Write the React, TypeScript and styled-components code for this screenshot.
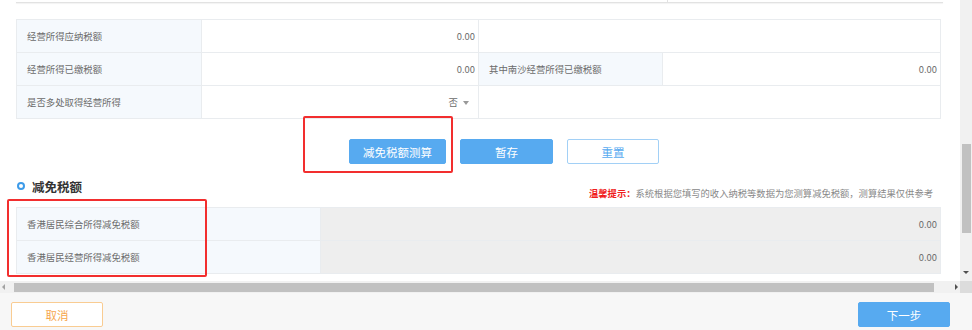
import React from 'react';
import styled, { createGlobalStyle } from 'styled-components';

const GlobalStyle = createGlobalStyle`
  html, body { margin: 0; padding: 0; background: #ffffff; }
  body { font-family: "Noto Sans CJK SC", "Liberation Sans", sans-serif; }
`;

const Page = styled.div`
  position: relative;
  width: 972px;
  height: 330px;
  display: flex;
  flex-direction: column;
  overflow: hidden;
`;

const Viewport = styled.div`
  display: flex;
  height: 293px;
`;

const MainColumn = styled.div`
  width: 960px;
  display: flex;
  flex-direction: column;
`;

const Content = styled.div`
  height: 281px;
  overflow: hidden;
  padding-left: 16px;
  box-sizing: border-box;
`;

const PrevTableEdge = styled.div`
  width: 927px;
  height: 2px;
  border-bottom: 1px solid #e2e2e2;
  box-shadow: 0 1px 1px rgba(0, 0, 0, 0.05);
  display: grid;
  grid-template-columns: 652px 1fr;
  & > div:first-child { border-right: 1px solid #e2e2e2; }
`;

const Table = styled.div<{ $cols: string; $top: number }>`
  margin-top: ${(p) => p.$top}px;
  width: 925px;
  display: grid;
  grid-template-columns: ${(p) => p.$cols};
  border-top: 1px solid #e9ecef;
  border-left: 1px solid #e9ecef;
  box-sizing: border-box;
`;

const Cell = styled.div<{ $kind?: 'label' | 'value' | 'blank' | 'gray'; $span?: number }>`
  height: 33px;
  box-sizing: border-box;
  border-right: 1px solid #e9ecef;
  border-bottom: 1px solid #e9ecef;
  display: flex;
  align-items: center;
  font-size: 9.4px;
  color: #6b6b6b;
  grid-column: span ${(p) => p.$span ?? 1};
  background: ${(p) =>
    p.$kind === 'label' ? '#f5f9fd' : p.$kind === 'gray' ? '#eeeeee' : '#ffffff'};
  justify-content: ${(p) => (p.$kind === 'label' ? 'flex-start' : 'flex-end')};
  padding: ${(p) => (p.$kind === 'label' ? '0 0 0 10px' : '0 3px 0 0')};
`;

const Caret = styled.span`
  display: inline-block;
  margin-left: 5px;
  margin-right: 6px;
  width: 0;
  height: 0;
  border-left: 3.5px solid transparent;
  border-right: 3.5px solid transparent;
  border-top: 4px solid #999;
  transform: translateY(1px);
`;

const ButtonRow = styled.div`
  display: flex;
  gap: 14px;
  padding-left: 333px;
  margin-top: 20px;
`;

const Button = styled.button<{ $variant: 'primary' | 'outline' | 'warn'; $w: number }>`
  width: ${(p) => p.$w}px;
  height: 25px;
  border-radius: 2px;
  font-family: inherit;
  font-size: 11.5px;
  padding: 0;
  cursor: pointer;
  box-sizing: border-box;
  background: ${(p) => (p.$variant === 'primary' ? '#57aaf0' : '#ffffff')};
  color: ${(p) =>
    p.$variant === 'primary' ? '#ffffff' : p.$variant === 'warn' ? '#f6a64c' : '#57aaf0'};
  border: 1px solid
    ${(p) =>
      p.$variant === 'primary' ? '#57aaf0' : p.$variant === 'warn' ? '#f9cc92' : '#a2d0f6'};
`;

const SectionHeader = styled.div`
  width: 925px;
  height: 30px;
  margin-top: 13px;
  display: flex;
  justify-content: space-between;
`;

const Title = styled.div`
  display: flex;
  align-items: center;
  gap: 7px;
  height: 18px;
  font-size: 12.5px;
  font-weight: bold;
  color: #333;
  align-self: flex-start;
`;

const Ring = styled.span`
  width: 8px;
  height: 8px;
  box-sizing: border-box;
  border: 2px solid #3d9be9;
  border-radius: 50%;
  margin-left: 1px;
`;

const Tip = styled.div`
  align-self: flex-end;
  margin-bottom: 7px;
  margin-right: 8px;
  font-size: 9.3px;
  line-height: 14px;
  color: #888;
  b { color: #f01d1d; }
`;

const HScroll = styled.div`
  height: 12px;
  background: #f1f1f1;
  display: flex;
  align-items: center;
`;

const HThumb = styled.div`
  margin-left: 9px;
  width: 920px;
  height: 9px;
  background: #c1c1c1;
`;

const Arrow = styled.span<{ $dir: 'left' | 'right' | 'down' }>`
  width: 0;
  height: 0;
  ${(p) =>
    p.$dir === 'down'
      ? 'border-left: 3px solid transparent; border-right: 3px solid transparent; border-top: 3px solid #505050;'
      : p.$dir === 'left'
      ? 'border-top: 3px solid transparent; border-bottom: 3px solid transparent; border-right: 3px solid #a3a3a3;'
      : 'border-top: 3px solid transparent; border-bottom: 3px solid transparent; border-left: 3px solid #505050;'}
`;

const VScroll = styled.div`
  width: 12px;
  display: flex;
  flex-direction: column;
  background: #f1f1f1;
`;

const VTrack = styled.div`
  height: 281px;
  display: flex;
  flex-direction: column;
  align-items: center;
`;

const VThumb = styled.div`
  margin-top: 144px;
  width: 9px;
  height: 89px;
  background: #c1c1c1;
`;

const Corner = styled.div`
  height: 12px;
  background: #dcdcdc;
`;

const Footer = styled.div`
  flex: 1;
  background: #f7f7f7;
  display: flex;
  justify-content: space-between;
  align-items: flex-start;
  padding: 9px 22px 0 11px;
`;

const Annotation = styled.div<{ $x: number; $y: number; $w: number; $h: number }>`
  position: absolute;
  left: ${(p) => p.$x}px;
  top: ${(p) => p.$y}px;
  width: ${(p) => p.$w}px;
  height: ${(p) => p.$h}px;
  box-sizing: border-box;
  border: 2px solid #f22e2e;
  border-radius: 2px;
  pointer-events: none;
`;

export default function App() {
  return (
    <Page>
      <GlobalStyle />
      <Viewport>
        <MainColumn>
          <Content>
            <PrevTableEdge>
              <div />
              <div />
            </PrevTableEdge>
            <Table $cols="185px 277px 184px 1fr" $top={16}>
              <Cell $kind="label">经营所得应纳税额</Cell>
              <Cell $kind="value">0.00</Cell>
              <Cell $kind="blank" $span={2} />
              <Cell $kind="label">经营所得已缴税额</Cell>
              <Cell $kind="value">0.00</Cell>
              <Cell $kind="label">其中南沙经营所得已缴税额</Cell>
              <Cell $kind="value">0.00</Cell>
              <Cell $kind="label">是否多处取得经营所得</Cell>
              <Cell $kind="value">
                否<Caret />
              </Cell>
              <Cell $kind="blank" $span={2} />
            </Table>
            <ButtonRow>
              <Button $variant="primary" $w={97}>减免税额测算</Button>
              <Button $variant="primary" $w={93}>暂存</Button>
              <Button $variant="outline" $w={92}>重置</Button>
            </ButtonRow>
            <SectionHeader>
              <Title>
                <Ring />
                减免税额
              </Title>
              <Tip>
                <b>温馨提示：</b>系统根据您填写的收入纳税等数据为您测算减免税额，测算结果仅供参考
              </Tip>
            </SectionHeader>
            <Table $cols="304px 1fr" $top={0}>
              <Cell $kind="label">香港居民综合所得减免税额</Cell>
              <Cell $kind="gray">0.00</Cell>
              <Cell $kind="label">香港居民经营所得减免税额</Cell>
              <Cell $kind="gray">0.00</Cell>
            </Table>
          </Content>
          <HScroll>
            <span style={{ marginLeft: 2, display: 'flex' }}>
              <Arrow $dir="left" />
            </span>
            <HThumb />
            <span style={{ marginLeft: 21, display: 'flex' }}>
              <Arrow $dir="right" />
            </span>
          </HScroll>
        </MainColumn>
        <VScroll>
          <VTrack>
            <VThumb />
            <span style={{ marginTop: 38, display: 'flex' }}>
              <Arrow $dir="down" />
            </span>
          </VTrack>
          <Corner />
        </VScroll>
      </Viewport>
      <Footer>
        <Button $variant="warn" $w={92}>取消</Button>
        <Button $variant="primary" $w={92}>下一步</Button>
      </Footer>
      <Annotation $x={303} $y={116} $w={150} $h={57} />
      <Annotation $x={7} $y={199} $w={200} $h={78} />
    </Page>
  );
}
